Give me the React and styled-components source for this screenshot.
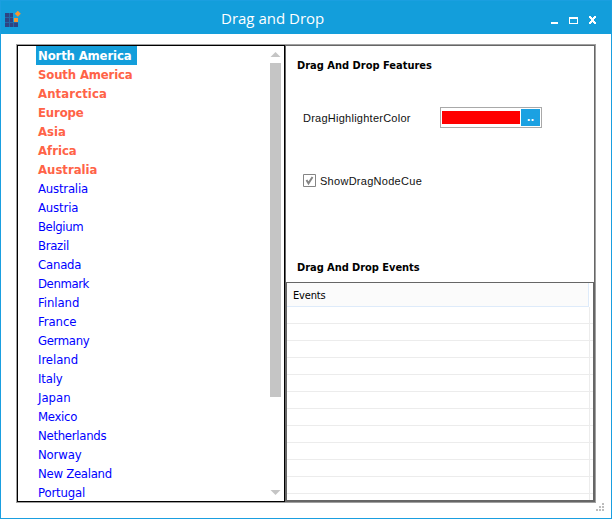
import React from "react";
import styled, { createGlobalStyle } from "styled-components";

const Global = createGlobalStyle`
  *, *::before { box-sizing: border-box; }
  body { margin: 0; background: #fff; overflow: hidden; }
`;

const Window = styled.div`
  width: 612px;
  height: 519px;
  display: flex;
  flex-direction: column;
  background: #fff;
  border: 1px solid #1a9fe0;
  position: relative;
  font-family: "DejaVu Sans Condensed", "DejaVu Sans", sans-serif;
  font-stretch: condensed;
`;

const TitleBar = styled.header`
  height: 33px;
  flex: none;
  display: grid;
  grid-template-columns: 30px 1fr 62px;
  background: #139edb;
`;

const Title = styled.h1`
  margin: 0;
  padding-left: 190px;
  font: 400 15px/35px "Open Sans", "Noto Sans", sans-serif;
  color: #fff;
  white-space: nowrap;
`;

const Icon = styled.svg`
  display: block;
`;

const Frame = styled.main`
  width: 580px;
  height: 459px;
  margin: 10px 0 0 15px;
  display: flex;
  border: 1px solid #a0a0a0;
`;

const TreePane = styled.section`
  width: 268px;
  display: flex;
  justify-content: space-between;
  border: 1px solid #000;
  overflow: hidden;
`;

const NodeList = styled.ul`
  margin: 0;
  padding: 0 0 0 18px;
  list-style: none;
`;

const Node = styled.li`
  width: max-content;
  height: 19px;
  padding: 0 6px 0 2px;
  font-size: 13px;
  line-height: 19px;
  white-space: nowrap;
  font-weight: ${(p) => (p.$bold ? 700 : 400)};
  letter-spacing: ${(p) => p.$spacing}px;
  color: ${(p) => (p.$selected ? "#fff" : p.$bold ? "#ff6347" : "#0000ff")};
  background: ${(p) => (p.$selected ? "#139edb" : "transparent")};
`;

const ScrollBar = styled.div`
  width: 14px;
  padding-top: 6px;
  display: flex;
  flex-direction: column;
`;

const Thumb = styled.div`
  width: 11px;
  height: 334px;
  margin: 6px 0 93px;
  background: #c5c5c5;
`;

const SidePane = styled.section`
  width: 310px;
  display: flex;
  flex-direction: column;
  border: 1px solid #666;
`;

const Heading = styled.h2`
  margin: 0;
  padding-left: 11px;
  font-size: 11px;
  line-height: 16px;
  font-weight: 700;
  letter-spacing: ${(p) => p.$spacing}px;
  white-space: nowrap;
  color: #000;
`;

const Features = styled.div`
  height: 236px;
  flex: none;
  padding-top: 12px;
`;

const Field = styled.div`
  height: 21px;
  margin: 33px 0 0 17px;
  display: flex;
  align-items: center;
`;

const Label = styled.span`
  width: 137px;
  padding-top: 2px;
  font: 400 11px/21px "Liberation Sans", Arial, sans-serif;
  letter-spacing: ${(p) => p.$spacing}px;
  white-space: nowrap;
  color: #111;
`;

const ColorBox = styled.div`
  width: 102px;
  height: 21px;
  padding: 1px;
  display: flex;
  align-items: center;
  gap: 1px;
  border: 1px solid #a9a9a9;
`;

const Swatch = styled.div`
  width: 78px;
  height: 13px;
  background: #f00;
`;

const PickButton = styled.button`
  width: 19px;
  height: 17px;
  padding: 0;
  border: 0;
  background: #1ba1e2;
  color: #fff;
  font: 700 10px/14px "DejaVu Sans", sans-serif;
`;

const CheckRow = styled.label`
  height: 21px;
  margin: 42px 0 0 17px;
  display: flex;
  align-items: center;
  gap: 4px;
`;

const EventsHeading = styled(Heading)`
  margin-top: 69px;
`;

const EventsGrid = styled.div`
  flex: 1;
  border: 1px solid #666;
  overflow: hidden;
`;

const GridHeader = styled.div`
  width: 302px;
  height: 24px;
  padding-left: 6px;
  font-size: 11px;
  line-height: 25px;
  letter-spacing: ${(p) => p.$spacing}px;
  color: #000;
  background: #fbfbfb;
  border-right: 1px solid #deebfa;
  border-bottom: 1px solid #deebfa;
`;

const GridRow = styled.div`
  height: 17px;
  border-bottom: 1px solid #ececec;
  &::before {
    content: "";
    display: block;
    width: 303px;
    height: 17px;
    border-right: 1px solid #ececec;
  }
`;

const Grip = styled(Icon)`
  position: absolute;
  right: 7px;
  bottom: 7px;
`;

const NODES = [
  ["North America", true, -0.15],
  ["South America", true, -0.15],
  ["Antarctica", true, 0.1],
  ["Europe", true, -0.15],
  ["Asia", true, 0],
  ["Africa", true, 0],
  ["Australia", true, 0],
  ["Australia", false, -0.2],
  ["Austria", false, -0.15],
  ["Belgium", false, -0.4],
  ["Brazil", false, -0.3],
  ["Canada", false, -0.2],
  ["Denmark", false, -0.4],
  ["Finland", false, -0.05],
  ["France", false, -0.05],
  ["Germany", false, -0.35],
  ["Ireland", false, -0.05],
  ["Italy", false, -0.15],
  ["Japan", false, 0],
  ["Mexico", false, -0.3],
  ["Netherlands", false, -0.27],
  ["Norway", false, -0.15],
  ["New Zealand", false, -0.27],
  ["Portugal", false, -0.15],
];

const Logo = () => (
  <Icon width="30" height="33" viewBox="1 1 30 33" shapeRendering="crispEdges">
    <path fill="#2f4482" d="M5 13h4v4h-4zM9.5 13h3.7v4h-3.7zM5 18h4v4h-4zM9.5 18h3.7v4h-3.7zM5 23h4v4h-4zM9.5 23h3.7v4h-3.7zM14 23h4v4h-4z" />
    <path fill="#2f4482" opacity=".6" d="M5 17h8v1h-8zM5 22h13v1h-13zM9 13h1v14h-1zM13 22h1v5h-1z" />
    <path fill="#f7962f" d="M14 18h4v4h-4z" />
    <path fill="#f7962f" shapeRendering="auto" d="M17.8 10.8l3 3-3 3-3-3z" />
  </Icon>
);

const WindowControls = () => (
  <Icon width="62" height="33" viewBox="549 1 62 33" shapeRendering="crispEdges">
    <path fill="#fff" d="M551 22h7v2h-7z" />
    <path fill="#fff" fillRule="evenodd" d="M569 17h9v7h-9zM570 19v4h7v-4z" />
    <path fill="#fff" d="M589 16h2v1h1v1h1v-1h1v-1h2v2h-1v1h-1v2h1v1h1v2h-2v-1h-1v-1h-1v1h-1v1h-2v-2h1v-1h1v-2h-1v-1h-1z" />
  </Icon>
);

export default function App() {
  return (
    <>
      <Global />
      <Window>
        <TitleBar>
          <Logo />
          <Title>Drag and Drop</Title>
          <WindowControls />
        </TitleBar>
        <Frame>
          <TreePane>
            <NodeList>
              {NODES.map(([name, bold, spacing], i) => (
                <Node key={i} $bold={bold} $selected={i === 0} $spacing={spacing}>
                  {name}
                </Node>
              ))}
            </NodeList>
            <ScrollBar>
              <Icon width="11" height="5" viewBox="0 0 11 5">
                <path fill="#c5c5c5" d="M5.5 0L10.5 5H.5z" />
              </Icon>
              <Thumb />
              <Icon width="11" height="5" viewBox="0 0 11 5">
                <path fill="#c5c5c5" d="M5.5 5L.5 0h10z" />
              </Icon>
            </ScrollBar>
          </TreePane>
          <SidePane>
            <Features>
              <Heading $spacing={0}>Drag And Drop Features</Heading>
              <Field>
                <Label $spacing={0.25}>DragHighlighterColor</Label>
                <ColorBox>
                  <Swatch />
                  <PickButton>..</PickButton>
                </ColorBox>
              </Field>
              <CheckRow>
                <Icon width="13" height="13" viewBox="0 0 13 13">
                  <path fill="#fff" stroke="#858585" d="M.5.5h12v12H.5z" />
                  <path fill="none" stroke="#858585" strokeWidth="2" d="M3.5 6l2 3.3L9.5 3" />
                </Icon>
                <Label $spacing={0.28}>ShowDragNodeCue</Label>
              </CheckRow>
              <EventsHeading $spacing={-0.05}>Drag And Drop Events</EventsHeading>
            </Features>
            <EventsGrid>
              <GridHeader $spacing={-0.15}>Events</GridHeader>
              {Array.from({ length: 12 }, (_, i) => (
                <GridRow key={i} />
              ))}
            </EventsGrid>
          </SidePane>
        </Frame>
        <Grip width="8" height="8" viewBox="0 0 8 8">
          <path fill="#bdbdbd" d="M6 0h2v2H6zM3 3h2v2H3zM6 3h2v2H6zM0 6h2v2H0zM3 6h2v2H3zM6 6h2v2H6z" />
        </Grip>
      </Window>
    </>
  );
}
